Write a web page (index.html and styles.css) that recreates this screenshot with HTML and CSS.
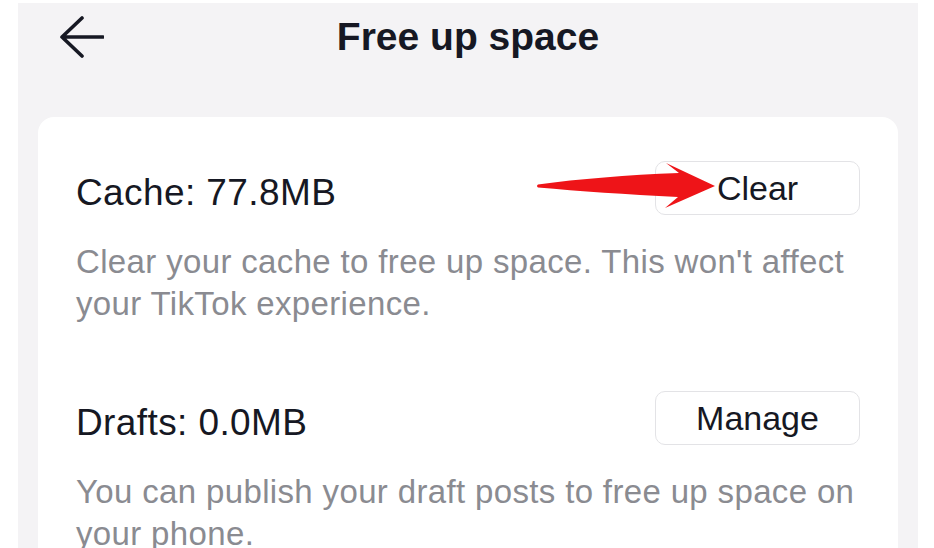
FILE: index.html
```html
<!DOCTYPE html>
<html lang="en">
<head>
<meta charset="utf-8">
<title>Free up space</title>
<link rel="stylesheet" href="styles.css">
</head>
<body>
<div class="panel">
  <header class="header">
    <svg class="back" width="46" height="44" viewBox="58 15 46 44" aria-hidden="true">
      <path d="M103 37 H62 M82 18 L62 37 L82 56" fill="none" stroke="#161823" stroke-width="3.6" stroke-linecap="round" stroke-linejoin="round"/>
    </svg>
    <h1 class="title">Free up space</h1>
  </header>
  <main class="card">
    <section class="section">
      <div class="row">
        <div class="label">Cache: 77.8MB</div>
        <button class="btn">Clear</button>
      </div>
      <p class="desc">Clear your cache to free up space. This won't affect your TikTok experience.</p>
    </section>
    <section class="section section-next">
      <div class="row">
        <div class="label">Drafts: 0.0MB</div>
        <button class="btn">Manage</button>
      </div>
      <p class="desc">You can publish your draft posts to free up space on your phone.</p>
    </section>
    <svg class="pointer" width="200" height="60" viewBox="530 155 200 60" aria-hidden="true">
      <path d="M538 184.5 Q600 176 679 173 L666 163 L715 186 L665 208 L678 197 Q600 193 538 187.5 Q536 186 538 184.5 Z" fill="#ee1418"/>
    </svg>
  </main>
</div>
</body>
</html>
```

FILE: styles.css
```css
html, body {
  margin: 0;
  padding: 0;
  background: #ffffff;
  overflow: hidden;
}

body {
  font-family: "Liberation Sans", Arial, sans-serif;
  color: #161823;
}

.panel {
  margin: 3px 0 0 18px;
  width: 900px;
  height: 545px;
  background: #f4f3f5;
  overflow: hidden;
}

.header {
  height: 114px;
  box-sizing: border-box;
  padding-top: 12px;
  display: grid;
  grid-template-columns: 1fr auto 1fr;
  align-items: start;
}

.back {
  display: block;
  margin-left: 40px;
  justify-self: start;
}

.title {
  margin: 2px 0 0;
  font-size: 39px;
  line-height: 39px;
  font-weight: 700;
  color: #161823;
}

.card {
  position: relative;
  margin-left: 20px;
  width: 860px;
  height: 600px;
  background: #ffffff;
  border-radius: 16px;
  box-sizing: border-box;
  padding: 44px 38px 0 38px;
}

.section-next {
  margin-top: 66px;
}

.row {
  display: flex;
  justify-content: space-between;
  align-items: flex-start;
  height: 54px;
}

.label {
  margin-top: 13px;
  font-size: 37px;
  line-height: 37px;
  letter-spacing: 0.4px;
  color: #161823;
}

.btn {
  width: 205px;
  height: 54px;
  box-sizing: border-box;
  border: 1.5px solid #e3e3e6;
  border-radius: 10px;
  background: #ffffff;
  font-family: "Liberation Sans", Arial, sans-serif;
  font-size: 34px;
  line-height: 34px;
  color: #161823;
  display: flex;
  align-items: center;
  justify-content: center;
  padding: 0;
}

.desc {
  margin: 26px -20px 0 0;
  font-size: 33px;
  line-height: 42px;
  letter-spacing: 0.35px;
  color: #8a8b91;
}

.pointer {
  position: absolute;
  left: 492px;
  top: 38px;
  filter: blur(0.4px);
}
```
